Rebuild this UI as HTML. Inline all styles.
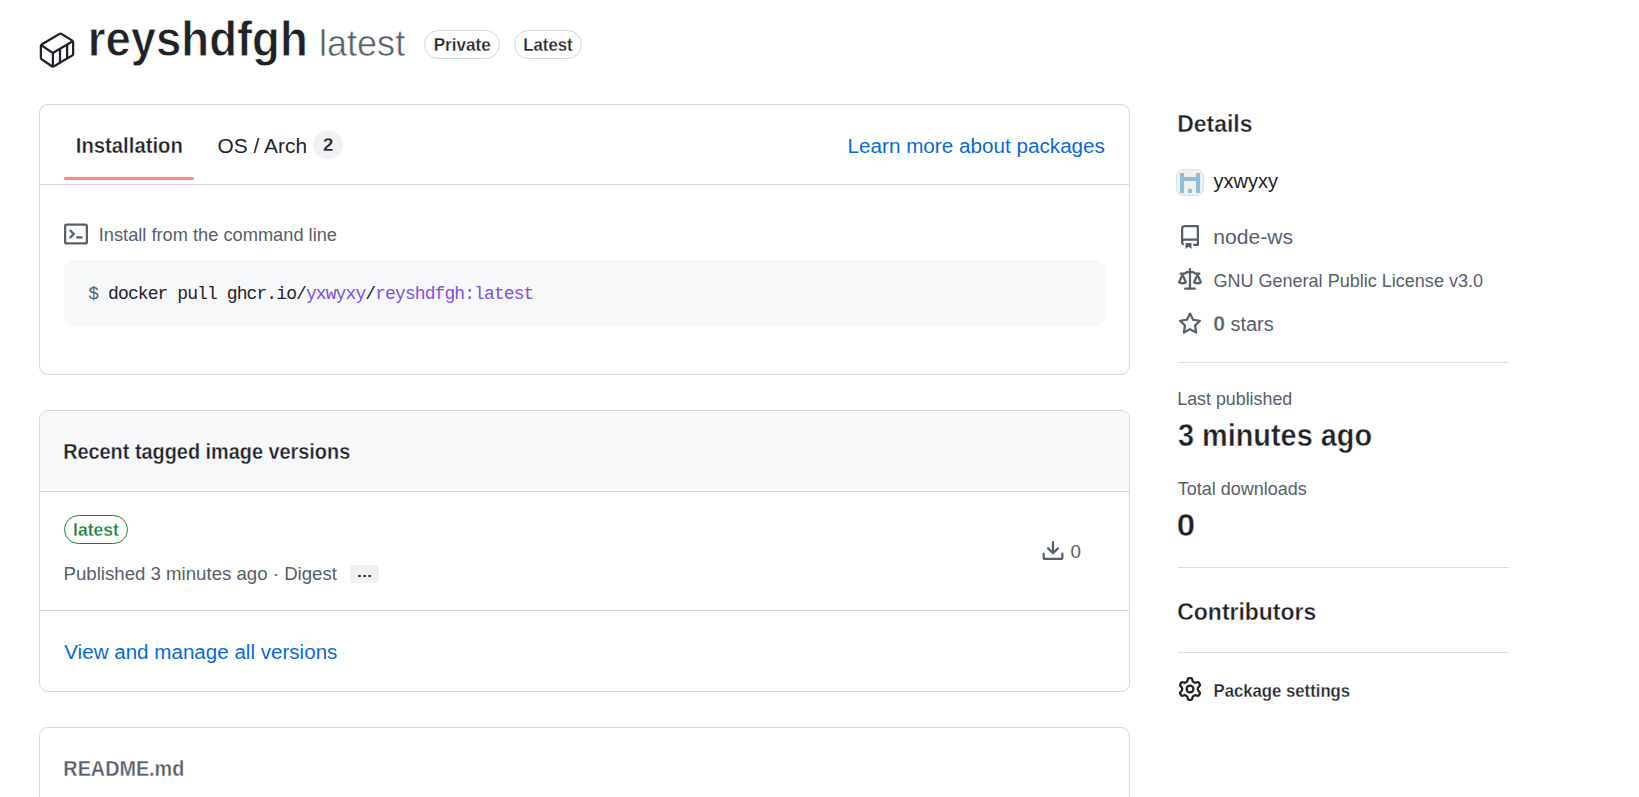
<!DOCTYPE html>
<html><head><meta charset="utf-8">
<style>
*{box-sizing:border-box;margin:0;padding:0}
html,body{width:1639px;height:797px;overflow:hidden;background:#fff}
body{font-family:"Liberation Sans",sans-serif;color:#1f2328;position:relative}
.a{position:absolute;white-space:nowrap;line-height:1;transform-origin:0 0}
.box{position:absolute;border:1px solid #d0d7de;border-radius:9px;background:#fff}
.hr{position:absolute;height:1px;background:#d8dee4}
svg{position:absolute;display:block}
</style></head><body>

<!-- header icon -->
<svg id="i-pkg" style="left:38.6px;top:32.2px" width="36" height="36" viewBox="0 0 24 24" fill="#1f2328"><path d="M13.152.682a2.251 2.251 0 0 1 2.269 0l.007.004 6.957 4.276a2.277 2.277 0 0 1 1.126 1.964v7.516c0 .81-.432 1.56-1.133 1.968l-.002.001-11.964 7.037-.004.003c-.706.41-1.578.41-2.284 0l-.026-.015-6.503-4.502a2.268 2.268 0 0 1-1.096-1.943V9.438c0-.392.1-.77.284-1.1l.003-.006.014-.026c.197-.342.48-.627.82-.827h.002L13.152.681Zm.757 1.295h-.001L2.648 8.616l6.248 4.247a.775.775 0 0 0 .758-.01h.001l11.633-6.804-6.629-4.074a.75.75 0 0 0-.75.003ZM8.517 14.33a2.286 2.286 0 0 1-.393-.18l-.023-.014-6.102-4.147v7.003c0 .275.145.528.379.664l.025.014 6.114 4.232V14.33ZM18 9.709l-3.25 1.9v7.548L18 17.245Zm-7.59 4.438-.002.002a2.296 2.296 0 0 1-.391.18v7.612l3.233-1.902v-7.552Zm9.09-5.316v7.532l2.124-1.25a.776.776 0 0 0 .387-.671V7.363Z"/></svg>
<div class="a" id="l-private" style="left:424px;top:30px;width:76px;height:29px;border:1px solid #d0d7de;border-radius:15px"></div>
<div class="a" id="l-latest" style="left:514px;top:30px;width:68px;height:29px;border:1px solid #d0d7de;border-radius:15px"></div>

<!-- box 1 -->
<div class="box" style="left:39px;top:104px;width:1091px;height:271px"></div>
<div class="hr" style="left:40px;top:184px;width:1089px;background:#d0d7de"></div>
<div class="a" style="left:64px;top:176.5px;width:129.5px;height:3px;background:#fd8c73;border-radius:2px"></div>
<div class="a" style="left:313px;top:130px;width:30px;height:29px;border-radius:15px;background:#eff1f3"></div>
<svg id="i-term" style="left:64px;top:222px" width="24" height="24" viewBox="0 0 16 16" fill="#57606a"><path d="M0 2.75C0 1.784.784 1 1.75 1h12.5c.966 0 1.75.784 1.75 1.75v10.5A1.75 1.75 0 0 1 14.25 15H1.75A1.75 1.75 0 0 1 0 13.25Zm1.75-.25a.25.25 0 0 0-.25.25v10.5c0 .138.112.25.25.25h12.5a.25.25 0 0 0 .25-.25V2.75a.25.25 0 0 0-.25-.25ZM7.25 8a.749.749 0 0 1-.22.53l-2.25 2.25a.749.749 0 0 1-1.275-.326.749.749 0 0 1 .215-.734L5.44 8 3.72 6.28a.749.749 0 0 1 .326-1.275.749.749 0 0 1 .734.215l2.25 2.25c.141.14.22.331.22.53Zm1.500 1.500h3a.75.75 0 0 1 0 1.500h-3a.75.75 0 0 1 0-1.500Z"/></svg>
<div class="a" style="left:64px;top:260px;width:1041px;height:65.5px;background:#f6f8fa;border-radius:9px"></div>
<div class="a" id="t-code" style="left:88.3px;top:284.8px;font-size:18px;letter-spacing:-0.91px;color:#1f2328;font-family:'Liberation Mono',monospace"><span style="color:#57606a">$</span> docker pull ghcr.io/<span style="color:#8250df">yxwyxy</span>/<span style="color:#8250df">reyshdfgh:latest</span></div>

<!-- box 2 -->
<div class="box" style="left:39px;top:410px;width:1091px;height:282px;overflow:hidden"><div style="height:81px;background:#f6f8fa;border-bottom:1px solid #d0d7de"></div></div>
<div class="a" style="left:64px;top:515px;width:64px;height:29px;border:1px solid #1a7f37;border-radius:15px"></div>
<div class="a" style="left:350px;top:565px;width:29px;height:17.5px;background:#eff1f3;border-radius:2px"></div>
<div class="a" style="left:358.2px;top:574.7px;width:2.5px;height:2.5px;border-radius:50%;background:#24292f;box-shadow:5.1px 0 #24292f,10.2px 0 #24292f"></div>
<svg id="i-dl" style="left:1041px;top:539px" width="24" height="24" viewBox="0 0 16 16" fill="#57606a"><path d="M2.75 14A1.75 1.75 0 0 1 1 12.25v-2.5a.75.75 0 0 1 1.5 0v2.5c0 .138.112.25.25.25h10.5a.25.25 0 0 0 .25-.25v-2.5a.75.75 0 0 1 1.5 0v2.5A1.75 1.75 0 0 1 13.25 14Z"/><path d="M7.25 7.689V2a.75.75 0 0 1 1.5 0v5.689l1.97-1.969a.749.749 0 1 1 1.06 1.06l-3.25 3.25a.749.749 0 0 1-1.06 0L4.22 6.78a.749.749 0 1 1 1.06-1.06l1.97 1.969Z"/></svg>
<div class="hr" style="left:40px;top:610px;width:1089px;background:#d0d7de"></div>

<!-- box 3 -->
<div class="box" style="left:39px;top:727px;width:1091px;height:120px"></div>

<!-- sidebar -->
<div class="a" id="avatar" style="left:1176.4px;top:169.3px;width:27.2px;height:27.2px;background:#f0f0f0;border:1px solid #e1e1e1;border-radius:7px"></div>
<svg id="i-ident" style="left:1180px;top:173px" width="20" height="20" viewBox="0 0 5 5" fill="#8fbfd8" shape-rendering="crispEdges"><path d="M0 0h1v5h-1zM4 0h1v5h-1zM1 1h3v1h-3zM2 4h1v1h-1z"/></svg>
<svg id="i-repo" style="left:1178px;top:225px" width="24" height="24" viewBox="0 0 16 16" fill="#57606a"><path d="M2 2.5A2.5 2.5 0 0 1 4.5 0h8.75a.75.75 0 0 1 .75.75v12.5a.75.75 0 0 1-.75.75h-2.5a.75.75 0 0 1 0-1.5h1.75v-2h-8a1 1 0 0 0-.714 1.7.75.75 0 1 1-1.072 1.05A2.495 2.495 0 0 1 2 11.5Zm10.5-1h-8a1 1 0 0 0-1 1v6.708A2.486 2.486 0 0 1 4.5 9h8ZM5 12.25a.25.25 0 0 1 .25-.25h3.5a.25.25 0 0 1 .25.25v3.25a.25.25 0 0 1-.4.2l-1.45-1.087a.249.249 0 0 0-.3 0L5.4 15.7a.25.25 0 0 1-.4-.2Z"/></svg>
<svg id="i-law" style="left:1178px;top:268.4px" width="24" height="24" viewBox="0 0 16 16" fill="#57606a"><path d="M8.75.75V2h.985c.304 0 .603.08.867.231l1.29.736c.038.022.08.033.124.033h2.234a.75.75 0 0 1 0 1.5h-.427l2.111 4.692a.75.75 0 0 1-.154.838l-.53-.53.529.531-.001.002-.002.002-.006.006-.006.005-.01.01-.045.04c-.21.176-.441.327-.686.45C14.556 10.78 13.88 11 13 11a4.498 4.498 0 0 1-2.023-.454 3.544 3.544 0 0 1-.686-.45l-.045-.04-.016-.015-.006-.006-.004-.004v-.001a.75.75 0 0 1-.154-.838L12.178 4.5h-.162c-.305 0-.604-.079-.868-.231l-1.29-.736a.245.245 0 0 0-.124-.033H8.750V13h2.500a.75.75 0 0 1 0 1.500h-6.500a.75.75 0 0 1 0-1.500h2.500V3.500h-.984a.245.245 0 0 0-.124.033l-1.289.737c-.265.15-.564.23-.869.23h-.162l2.112 4.692a.75.75 0 0 1-.154.838l-.53-.53.529.531-.001.002-.002.002-.006.006-.016.015-.045.04c-.21.176-.441.327-.686.45C4.556 10.78 3.880 11 3 11a4.498 4.498 0 0 1-2.023-.454 3.544 3.544 0 0 1-.686-.45l-.045-.04-.016-.015-.006-.006-.004-.004v-.001a.75.75 0 0 1-.154-.838L2.178 4.500H1.750a.75.75 0 0 1 0-1.500h2.234a.249.249 0 0 0 .125-.033l1.288-.737c.265-.15.564-.23.869-.23h.984V.75a.75.75 0 0 1 1.500 0Zm2.945 8.477c.285.135.718.273 1.305.273s1.020-.138 1.305-.273L13 6.327Zm-10 0c.285.135.718.273 1.305.273s1.020-.138 1.305-.273L3 6.327Z"/></svg>
<svg id="i-star" style="left:1178px;top:311.8px" width="24" height="24" viewBox="0 0 16 16" fill="#57606a"><path d="M8 .25a.75.75 0 0 1 .673.418l1.882 3.815 4.210.612a.75.75 0 0 1 .416 1.279l-3.046 2.970.719 4.192a.751.751 0 0 1-1.088.791L8 12.347l-3.766 1.980a.75.75 0 0 1-1.088-.79l.72-4.194L.818 6.374a.75.75 0 0 1 .416-1.280l4.210-.611L7.327.668A.75.75 0 0 1 8 .25Zm0 2.445L6.615 5.500a.75.75 0 0 1-.564.41l-3.097.45 2.240 2.184a.75.75 0 0 1 .216.664l-.528 3.084 2.769-1.456a.75.75 0 0 1 .698 0l2.770 1.456-.53-3.084a.75.75 0 0 1 .216-.664l2.240-2.183-3.096-.45a.75.75 0 0 1-.564-.41L8 2.694Z"/></svg>
<div class="hr" style="left:1178px;top:362px;width:331px"></div>
<div class="hr" style="left:1178px;top:567px;width:331px"></div>
<div class="hr" style="left:1178px;top:652px;width:331px"></div>
<svg id="i-gear" style="left:1178px;top:677px" width="24" height="24" viewBox="0 0 16 16" fill="#1f2328"><path d="M8 0a8.2 8.2 0 0 1 .701.031C9.444.095 9.990.645 10.160 1.290l.288 1.107c.018.066.079.158.212.224.231.114.454.243.668.386.123.082.233.09.299.071l1.103-.303c.644-.176 1.392.021 1.820.63.27.385.506.792.704 1.218.315.675.111 1.422-.364 1.891l-.814.806c-.049.048-.098.147-.088.294.016.257.016.515 0 .772-.01.147.038.246.088.294l.814.806c.475.469.679 1.216.364 1.891a7.977 7.977 0 0 1-.704 1.217c-.428.61-1.176.807-1.820.63l-1.102-.302c-.067-.019-.177-.011-.3.071a5.909 5.909 0 0 1-.668.386c-.133.066-.194.158-.211.224l-.29 1.106c-.168.646-.715 1.196-1.458 1.260a8.006 8.006 0 0 1-1.402 0c-.743-.064-1.289-.614-1.458-1.260l-.289-1.106c-.018-.066-.079-.158-.212-.224a5.738 5.738 0 0 1-.668-.386c-.123-.082-.233-.09-.299-.071l-1.103.303c-.644.176-1.392-.021-1.820-.63a8.120 8.120 0 0 1-.704-1.218c-.315-.675-.111-1.422.363-1.891l.815-.806c.05-.048.098-.147.088-.294a6.214 6.214 0 0 1 0-.772c.01-.147-.038-.246-.088-.294l-.815-.806C.635 6.045.431 5.298.746 4.623a7.920 7.920 0 0 1 .704-1.217c.428-.61 1.176-.807 1.820-.63l1.102.302c.067.019.177.011.3-.071.214-.143.437-.272.668-.386.133-.066.194-.158.211-.224l.29-1.106C6.009.645 6.556.095 7.299.030 7.530.010 7.764 0 8 0Zm-.571 1.525c-.036.003-.108.036-.137.146l-.289 1.105c-.147.561-.549.967-.998 1.189-.173.086-.34.183-.5.29-.417.278-.97.423-1.529.27l-1.103-.303c-.109-.03-.175.016-.195.045-.22.312-.412.644-.573.99-.014.031-.021.11.059.19l.815.806c.411.406.562.957.53 1.456a4.709 4.709 0 0 0 0 .582c.032.499-.119 1.050-.53 1.456l-.815.806c-.081.08-.073.159-.059.19.162.346.353.677.573.989.02.03.085.076.195.046l1.102-.303c.56-.153 1.113-.008 1.530.27.161.107.328.204.501.29.447.222.85.629.997 1.189l.289 1.105c.029.109.101.143.137.146a6.600 6.600 0 0 0 1.142 0c.036-.003.108-.036.137-.146l.289-1.105c.147-.561.549-.967.998-1.189.173-.086.34-.183.5-.29.417-.278.97-.423 1.529-.27l1.103.303c.109.029.175-.016.195-.045.22-.313.411-.644.573-.99.014-.031.021-.11-.059-.19l-.815-.806c-.411-.406-.562-.957-.53-1.456a4.709 4.709 0 0 0 0-.582c-.032-.499.119-1.050.53-1.456l.815-.806c.081-.08.073-.159.059-.19a6.464 6.464 0 0 0-.573-.989c-.02-.03-.085-.076-.195-.046l-1.102.303c-.56.153-1.113.008-1.530-.27a4.440 4.440 0 0 0-.501-.29c-.447-.222-.85-.629-.997-1.189l-.289-1.105c-.029-.11-.101-.143-.137-.146a6.600 6.600 0 0 0-1.142 0ZM11 8a3 3 0 1 1-6 0 3 3 0 0 1 6 0ZM9.500 8a1.500 1.500 0 1 0-3.001.001A1.500 1.500 0 0 0 9.500 8Z"/></svg>

<div class="a" id="t-title" style="left:88px;top:14px;font-size:49.20px;font-weight:700;color:#1f2328;transform:translateX(-0.31px) scaleX(0.9254);-webkit-text-stroke:0.8px #fff">reyshdfgh</div>
<div class="a" id="t-latest" style="left:319px;top:26px;font-size:36.30px;font-weight:400;color:#57606a;transform:translateX(0.07px) scaleX(0.9920);-webkit-text-stroke:0.5px #fff">latest</div>
<div class="a" id="t-private" style="left:433px;top:36px;font-size:18.36px;font-weight:700;color:#1f2328;transform:translateX(0.73px) scaleX(0.9298);-webkit-text-stroke:0.28px #fff">Private</div>
<div class="a" id="t-Latest" style="left:523px;top:36px;font-size:18.36px;font-weight:700;color:#1f2328;transform:translateX(0.28px) scaleX(0.9113);-webkit-text-stroke:0.28px #fff">Latest</div>
<div class="a" id="t-inst" style="left:75px;top:136px;font-size:21.42px;font-weight:700;color:#1f2328;transform:translateX(0.77px) scaleX(0.9477);-webkit-text-stroke:0.32px #fff">Installation</div>
<div class="a" id="t-os" style="left:217px;top:136px;font-size:20.79px;font-weight:400;color:#1f2328;transform:translateX(0.55px) scaleX(1.0060);">OS / Arch</div>
<div class="a" id="t-2" style="left:323px;top:136px;font-size:18.36px;font-weight:700;color:#1f2328;transform:translateX(-0.05px) scaleX(1.0209);-webkit-text-stroke:0.28px #eff1f3">2</div>
<div class="a" id="t-learn" style="left:847px;top:136px;font-size:20.79px;font-weight:400;color:#0969da;transform:translateX(0.52px) scaleX(0.9948);">Learn more about packages</div>
<div class="a" id="t-install" style="left:98px;top:227px;font-size:17.82px;font-weight:400;color:#57606a;transform:translateX(0.72px) scaleX(1.0242);">Install from the command line</div>
<div class="a" id="t-recent" style="left:63px;top:442px;font-size:21.42px;font-weight:700;color:#1f2328;transform:translateX(0.13px) scaleX(0.9281);-webkit-text-stroke:0.32px #f6f8fa">Recent tagged image versions</div>
<div class="a" id="t-tag" style="left:73px;top:521px;font-size:18.36px;font-weight:700;color:#1a7f37;transform:translateX(-0.01px) scaleX(0.9581);-webkit-text-stroke:0.28px #fff">latest</div>
<div class="a" id="t-pub" style="left:63px;top:566px;font-size:17.82px;font-weight:400;color:#57606a;transform:translateX(0.59px) scaleX(1.0457);">Published 3 minutes ago · Digest</div>
<div class="a" id="t-dl0" style="left:1070px;top:544px;font-size:17.82px;font-weight:400;color:#57606a;transform:translateX(0.41px) scaleX(1.0535);">0</div>
<div class="a" id="t-view" style="left:64px;top:642px;font-size:20.79px;font-weight:400;color:#0969da;transform:translateX(0.25px) scaleX(0.9907);">View and manage all versions</div>
<div class="a" id="t-readme" style="left:63px;top:759px;font-size:21.42px;font-weight:700;color:#57606a;transform:translateX(0.35px) scaleX(0.9245);-webkit-text-stroke:0.32px #fff">README.md</div>
<div class="a" id="t-details" style="left:1177px;top:112px;font-size:24.48px;font-weight:700;color:#1f2328;transform:translateX(0.32px) scaleX(0.9365);-webkit-text-stroke:0.37px #fff">Details</div>
<div class="a" id="t-user" style="left:1213px;top:171px;font-size:20.79px;font-weight:400;color:#1f2328;transform:translateX(0.58px) scaleX(0.9612);">yxwyxy</div>
<div class="a" id="t-repo" style="left:1213px;top:227px;font-size:20.79px;font-weight:400;color:#57606a;transform:translateX(0.36px) scaleX(1.0147);">node-ws</div>
<div class="a" id="t-lic" style="left:1213px;top:273px;font-size:17.82px;font-weight:400;color:#57606a;transform:translateX(0.38px) scaleX(1.0124);">GNU General Public License v3.0</div>
<div class="a" id="t-stars0" style="left:1213px;top:314px;font-size:21.42px;font-weight:700;color:#57606a;transform:translateX(0.27px) scaleX(0.9882);-webkit-text-stroke:0.32px #fff">0</div>
<div class="a" id="t-stars" style="left:1230px;top:314px;font-size:20.79px;font-weight:400;color:#57606a;transform:translateX(0.39px) scaleX(0.9620);">stars</div>
<div class="a" id="t-lastpub" style="left:1177px;top:391px;font-size:17.82px;font-weight:400;color:#57606a;transform:translateX(0.30px) scaleX(1.0004);">Last published</div>
<div class="a" id="t-3min" style="left:1178px;top:420px;font-size:30.60px;font-weight:700;color:#1f2328;transform:translateX(-0.05px) scaleX(0.9436);-webkit-text-stroke:0.46px #fff">3 minutes ago</div>
<div class="a" id="t-total" style="left:1177px;top:481px;font-size:17.82px;font-weight:400;color:#57606a;transform:translateX(0.74px) scaleX(1.0107);">Total downloads</div>
<div class="a" id="t-0" style="left:1177px;top:510px;font-size:30.60px;font-weight:700;color:#1f2328;transform:translateX(-0.24px) scaleX(1.0805);-webkit-text-stroke:0.46px #fff">0</div>
<div class="a" id="t-contrib" style="left:1177px;top:600px;font-size:24.48px;font-weight:700;color:#1f2328;transform:translateX(0.29px) scaleX(0.9374);-webkit-text-stroke:0.37px #fff">Contributors</div>
<div class="a" id="t-pset" style="left:1213px;top:682px;font-size:18.36px;font-weight:700;color:#1f2328;transform:translateX(0.51px) scaleX(0.9107);-webkit-text-stroke:0.28px #fff">Package settings</div>
</body></html>
